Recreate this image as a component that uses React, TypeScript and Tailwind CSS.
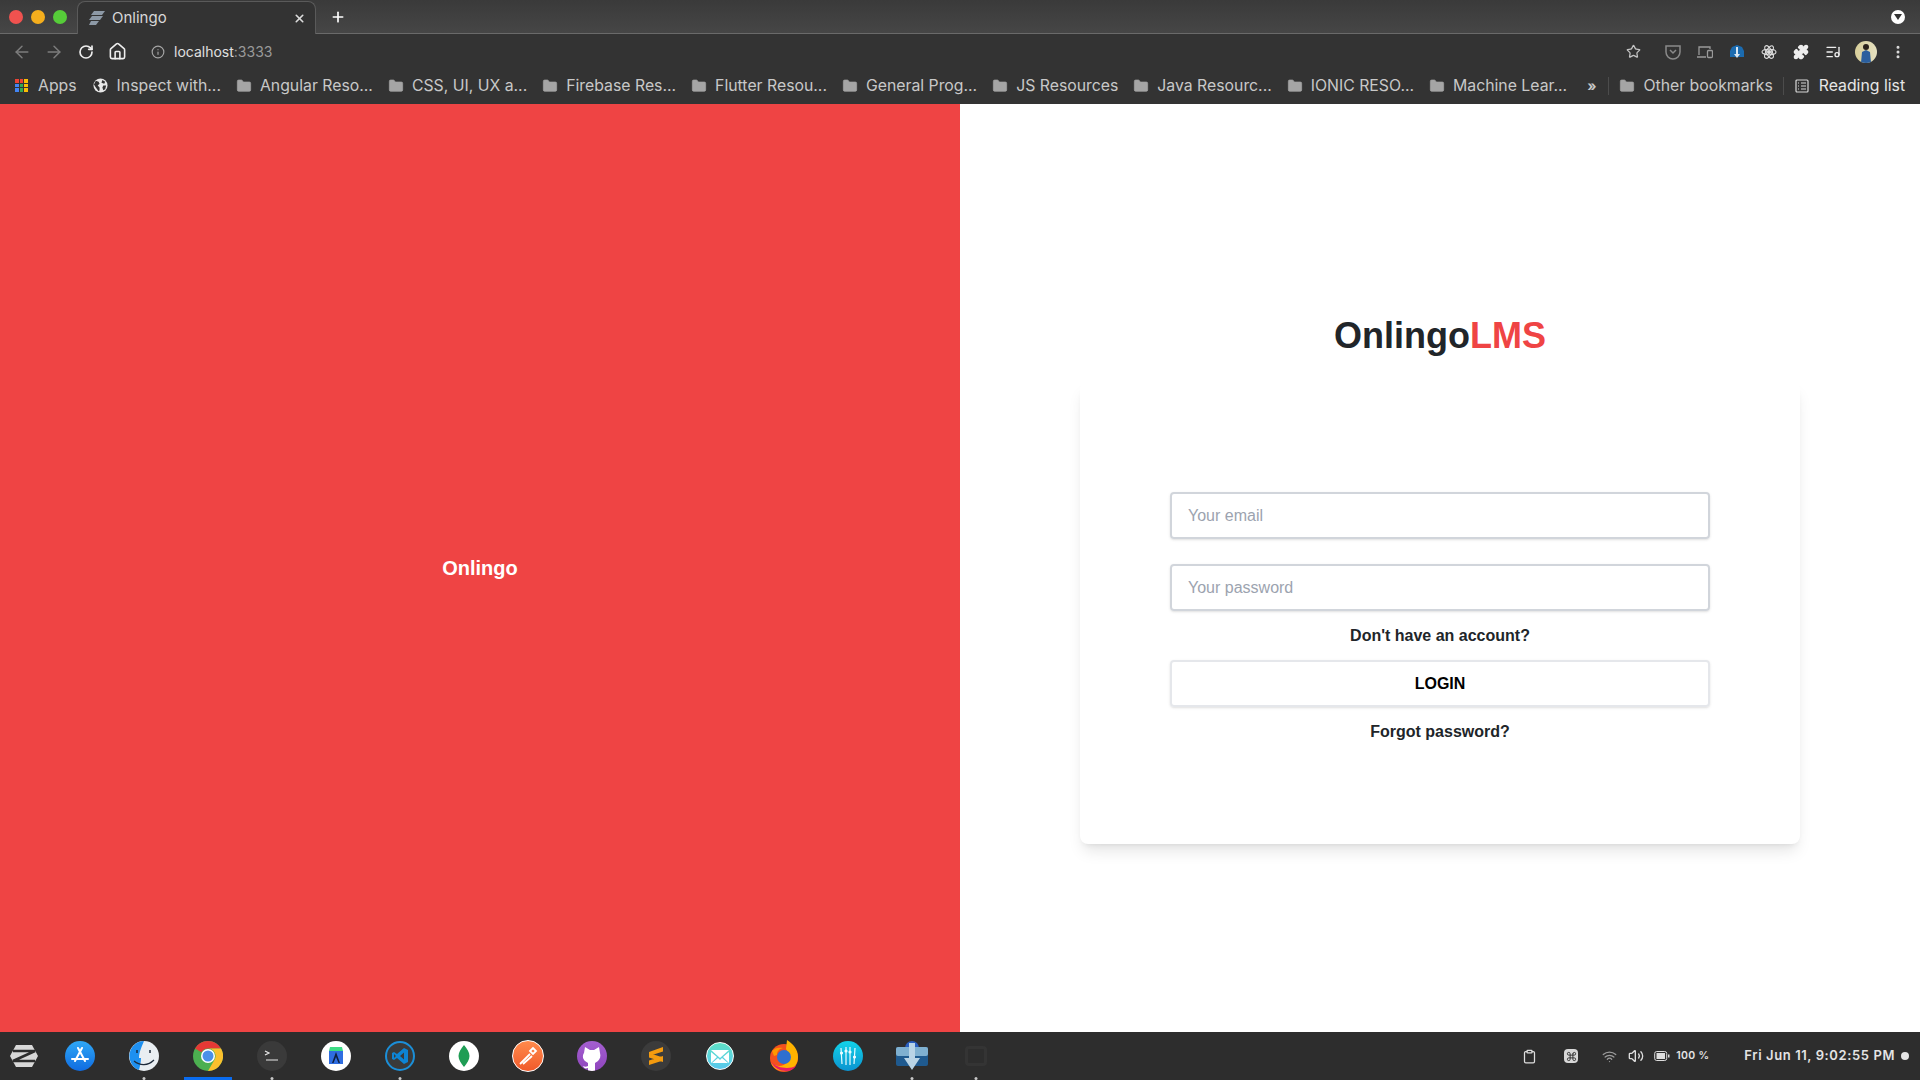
import { ArrowLeft, ArrowRight, RotateCw, Home, Info, Star, Puzzle, ListMusic, EllipsisVertical, Folder, Plus, X, Volume2, Clipboard, Command, Wifi } from "lucide-react";
import type { ReactNode } from "react";

const bookmarks = ["Angular Reso...", "CSS, UI, UX a...", "Firebase Res...", "Flutter Resou...", "General Prog...", "JS Resources", "Java Resourc...", "IONIC RESO...", "Machine Lear..."];

function FolderIcon() {
  return <Folder size={16} className="shrink-0 text-[#a5a5a5]" fill="#a5a5a5" strokeWidth={1} />;
}

function AppsGrid() {
  const colors = ["#ea4335", "#ea4335", "#fbbc05", "#4285f4", "#34a853", "#fbbc05", "#4285f4", "#34a853", "#fbbc05"];
  return (
    <div className="grid h-[13px] w-[13px] shrink-0 grid-cols-3 gap-[1px]">
      {colors.map((c, i) => (
        <span key={i} style={{ backgroundColor: c }} />
      ))}
    </div>
  );
}

function Globe() {
  return (
    <svg width="15" height="15" viewBox="0 0 16 16" className="shrink-0">
      <circle cx="8" cy="8" r="7.5" fill="#e8e8e8" />
      <path d="M3 3l3 1 1 2-2 2 2 2v3l-1 1-3-4-2-3zM10 2l3 2-1 2-3-1zM11 8l3 0-1 4-2 1-1-3z" fill="#333" />
    </svg>
  );
}

function TabStrip() {
  return (
    <div className="flex h-[34px] shrink-0 items-end border-b border-[#6a6a6a] bg-gradient-to-b from-[#3a3a3a] to-[#464646]">
      <div className="flex h-full w-[77px] items-center gap-2 pl-[9px]">
        <span className="h-[14px] w-[14px] rounded-full bg-[#f0524f]" />
        <span className="h-[14px] w-[14px] rounded-full bg-[#f5ae1d]" />
        <span className="h-[14px] w-[14px] rounded-full bg-[#56cc39]" />
      </div>
      <div className="mb-[-1px] flex h-[33px] w-[239px] items-center rounded-t-lg border border-b-0 border-[#5a5a5a] bg-[#333333] pl-[11px] pr-[9px]">
        <svg width="16" height="14" viewBox="0 0 16 14" className="shrink-0">
          <path d="M5 0h11l-3 4H2zM3 5h11l-3 4H0zM2 10h8l-3 4H0z" fill="#8d99a6" />
        </svg>
        <span className="ml-[7px] text-[15px] text-[#d8d8d8]">Onlingo</span>
        <X size={13} strokeWidth={3} className="ml-auto text-[#dcdcdc]" />
      </div>
      <div className="flex h-full items-center pl-[14px]">
        <Plus size={16} strokeWidth={2.5} className="text-white" />
      </div>
      <div className="ml-auto flex h-full items-center pr-[15px]">
        <span className="flex h-[14px] w-[14px] items-center justify-center rounded-full bg-white">
          <span className="h-0 w-0 border-x-[4px] border-t-[6px] border-x-transparent border-t-[#333]" />
        </span>
      </div>
    </div>
  );
}

function Toolbar() {
  return (
    <div className="flex h-[35px] shrink-0 items-center bg-[#333333] pl-[12px] pr-[14px]">
      <ArrowLeft size={20} strokeWidth={1.75} className="text-[#7d7d7d]" />
      <ArrowRight size={20} strokeWidth={1.75} className="ml-[12px] text-[#7d7d7d]" />
      <RotateCw size={16} strokeWidth={2.5} className="ml-[14px] text-[#eeeeee]" />
      <Home size={19} strokeWidth={2} className="ml-[14px] text-[#eeeeee]" />
      <Info size={14} className="ml-[24px] text-[#a5a5a5]" />
      <span className="ml-[9px] font-['Inter',sans-serif] text-[14px] text-[#e0e0e0]">
        localhost<span className="text-[#9a9a9a]">:3333</span>
      </span>
      <Star size={15} className="ml-auto text-[#c4c4c4]" />
      <div className="ml-[24px] flex items-center gap-[16px]">
        <svg width="16" height="16" viewBox="0 0 16 16" fill="none" stroke="#8a8a8a" strokeWidth="1.5">
          <path d="M1 2h14v6a7 7 0 0 1-14 0z" />
          <path d="M5 6l3 3 3-3" />
        </svg>
        <svg width="16" height="16" viewBox="0 0 16 16" fill="none" stroke="#9a9a9a" strokeWidth="1.3">
          <path d="M2 11V3h11v2M0 13h9" />
          <rect x="10.500" y="6.500" width="5" height="7" rx="1" />
        </svg>
        <svg width="16" height="16" viewBox="0 0 16 16">
          <path d="M8 1l5 2 2 4v6H1V7l2-4z" fill="#1b6bb0" />
          <path d="M7 3h2v7h2l-3 4-3-4h2z" fill="#d7e6f2" />
        </svg>
        <svg width="16" height="16" viewBox="0 0 16 16" fill="none" stroke="#dedede" strokeWidth="1.100">
          <ellipse cx="8" cy="8" rx="7" ry="2.800" />
          <ellipse cx="8" cy="8" rx="7" ry="2.800" transform="rotate(60 8 8)" />
          <ellipse cx="8" cy="8" rx="7" ry="2.800" transform="rotate(120 8 8)" />
          <circle cx="8" cy="8" r="1.500" fill="#dedede" />
        </svg>
        <Puzzle size={16} className="text-[#eeeeee]" fill="#eeeeee" />
        <ListMusic size={16} className="text-[#eeeeee]" />
      </div>
      <div className="ml-[14px] h-[22px] w-[22px] shrink-0 overflow-hidden rounded-full bg-gradient-to-r from-[#d8cf9a] to-[#e6e0c0]">
        <svg width="22" height="22" viewBox="0 0 22 22">
          <circle cx="11" cy="6" r="3" fill="#2a221c" />
          <path d="M6 22l1-11 4-2 4 2 1 11z" fill="#2b5f9e" />
        </svg>
      </div>
      <EllipsisVertical size={16} strokeWidth={2.5} className="ml-[13px] text-[#dddddd]" />
    </div>
  );
}

function BookmarksBar() {
  return (
    <div className="flex h-[35px] shrink-0 items-center whitespace-nowrap bg-[#333333] pb-[2px] pl-[15px] font-['Inter',sans-serif] text-[15.800px] text-[#c8c8c8]">
      <div className="flex items-center gap-[10px]">
        <AppsGrid />
        <span>Apps</span>
      </div>
      <div className="ml-[16px] flex items-center gap-[9px]">
        <Globe />
        <span>Inspect with...</span>
      </div>
      <div className="ml-[15px] flex">
        {bookmarks.map((b) => (
          <div key={b} className="mr-[15px] flex items-center gap-[8px]">
            <FolderIcon />
            <span>{b}</span>
          </div>
        ))}
      </div>
      <span className="ml-[5px] text-[14px] font-bold">»</span>
      <span className="ml-[12px] h-[18px] w-px bg-[#4c4c4c]" />
      <div className="ml-[10px] flex items-center gap-[8px]">
        <FolderIcon />
        <span>Other bookmarks</span>
      </div>
      <span className="ml-[10px] h-[18px] w-px bg-[#4c4c4c]" />
      <div className="ml-[11px] flex items-center gap-[10px] text-[#e6e6e6]">
        <svg width="14" height="14" viewBox="0 0 14 14" fill="none" stroke="#d8d8d8" strokeWidth="1.200">
          <rect x="1" y="1" width="12" height="12" rx="1" />
          <path d="M3 4h1M6 4h5M3 7h1M6 7h5M3 10h1M6 10h5" />
        </svg>
        <span>Reading list</span>
      </div>
    </div>
  );
}

function LoginPanel() {
  return (
    <div className="flex flex-1 flex-col items-center bg-white pt-[212px] font-['Liberation_Sans',Arial,sans-serif]">
      <h1 className="text-4xl font-bold text-[#212529]">
        Onlingo<span className="text-[#ef4444]">LMS</span>
      </h1>
      <div className="mt-[26px] flex h-[462px] w-[720px] flex-col rounded-lg bg-white px-[90px] pt-[110px] shadow-lg">
        <input placeholder="Your email" className="h-[47px] w-full shrink-0 rounded border-2 border-[#d1d5db] px-4 text-base text-gray-700 shadow-sm outline-none placeholder:text-[#9ca3af]" />
        <input type="password" placeholder="Your password" className="mt-[25px] h-[47px] w-full shrink-0 rounded border-2 border-[#d1d5db] px-4 text-base text-gray-700 shadow-sm outline-none placeholder:text-[#9ca3af]" />
        <p className="mt-[13px] text-center text-base font-bold leading-6 text-[#212529]">Don't have an account?</p>
        <button className="mt-[12px] h-[47px] w-full shrink-0 rounded border-2 border-[#e5e7eb] text-base font-bold text-black shadow-sm">LOGIN</button>
        <p className="mt-[13px] text-center text-base font-bold leading-6 text-[#212529]">Forgot password?</p>
      </div>
    </div>
  );
}

function Round({ bg, children }: { bg: string; children?: ReactNode }) {
  return (
    <span className="flex h-[30px] w-[30px] items-center justify-center overflow-hidden rounded-full" style={{ background: bg }}>
      {children}
    </span>
  );
}

const dockIcons: { key: string; dot?: boolean; active?: boolean; icon: ReactNode }[] = [
  {
    key: "store",
    icon: (
      <Round bg="linear-gradient(#2fa8f7,#0f6be0)">
        <svg width="20" height="20" viewBox="0 0 20 20" fill="none" stroke="#fff" strokeWidth="2" strokeLinecap="round">
          <path d="M12 2L5 15M8 2l7 13M2 13h16" />
        </svg>
      </Round>
    ),
  },
  {
    key: "finder",
    dot: true,
    icon: (
      <svg width="30" height="30" viewBox="0 0 30 30">
        <circle cx="15" cy="15" r="15" fill="#e9eef2" />
        <path d="M15 0a15 15 0 0 0-5 29c1-4 2-8 2-12h-2c0-6 3-12 5-17z" fill="#1e90f0" />
        <path d="M5 20c6 5 14 5 20-1" fill="none" stroke="#1d2a3a" strokeWidth="1.200" />
        <path d="M8 9v3M21 9v3" stroke="#1d2a3a" strokeWidth="1.500" />
      </svg>
    ),
  },
  {
    key: "chrome",
    active: true,
    icon: (
      <svg width="30" height="30" viewBox="0 0 30 30">
        <circle cx="15" cy="15" r="15" fill="#4caf50" />
        <path d="M15 0a15 15 0 0 1 13 7.500H15a7.500 7.500 0 0 0-6.500 3.750L2 7.500A15 15 0 0 1 15 0z" fill="#e53935" />
        <path d="M28 7.500A15 15 0 0 1 15 30l6.500-11.250A7.500 7.500 0 0 0 15 7.500z" fill="#fbc02d" />
        <circle cx="15" cy="15" r="7" fill="#fff" />
        <circle cx="15" cy="15" r="5.500" fill="#4a90e8" />
      </svg>
    ),
  },
  {
    key: "terminal",
    dot: true,
    icon: (
      <Round bg="#3a3a3a">
        <svg width="16" height="14" viewBox="0 0 16 14" fill="none" stroke="#e8e8e8" strokeWidth="1.200">
          <path d="M1 2l4 2-4 2M2 11h12" />
        </svg>
      </Round>
    ),
  },
  {
    key: "studio",
    icon: (
      <Round bg="#ffffff">
        <svg width="22" height="22" viewBox="0 0 22 22">
          <path d="M5 2h12l1 4H4z" fill="#3ddc84" />
          <rect x="4" y="6" width="14" height="13" fill="#2f6de0" />
          <path d="M11 7l-4 11h1.500L11 12l2.500 6H15z" fill="#10213f" />
        </svg>
      </Round>
    ),
  },
  {
    key: "vscode",
    dot: true,
    icon: (
      <span className="flex h-[30px] w-[30px] items-center justify-center rounded-full border-2 border-[#1b8fd8] bg-[#3a3a3a]">
        <svg width="18" height="18" viewBox="0 0 18 18">
          <path d="M13 1l4 2v12l-4 2-7-6-3 2-2-1v-6l2-1 3 2zM13 5.500L9 9l4 3.500zM3 7v4l2-2z" fill="#0d84d4" fillRule="evenodd" />
        </svg>
      </span>
    ),
  },
  {
    key: "mongo",
    icon: (
      <Round bg="#ffffff">
        <svg width="12" height="22" viewBox="0 0 12 22">
          <path d="M6 0c3 4 5.500 7 5.500 11S9 18 6 22C3 18 .5 15 .5 11S3 4 6 0z" fill="#1f9d55" />
        </svg>
      </Round>
    ),
  },
  {
    key: "postman",
    icon: (
      <span className="flex h-[32px] w-[32px] items-center justify-center rounded-full border border-[#fff] bg-gradient-to-b from-[#ff8a4c] to-[#f0592a]">
        <svg width="22" height="22" viewBox="0 0 22 22" fill="none" stroke="#fff" strokeWidth="1.800">
          <path d="M3 19L13 9M6 19l9-8M13 6l3-3 3 3-3 3z" />
        </svg>
      </span>
    ),
  },
  {
    key: "github",
    icon: (
      <Round bg="linear-gradient(#a45fd0,#8f45bd)">
        <svg width="22" height="26" viewBox="0 0 22 26" className="mt-[4px]" fill="#fff">
          <path d="M4 2l5 3h4l5-3 1 6c1 3 0 6-2 8-1 1-2 1-3 2v8H7v-3c-3 1-4 0-5-2 2 1 3 1 5 0v-3c-1-1-2-1-3-2-2-2-3-5-1-8z" />
        </svg>
      </Round>
    ),
  },
  {
    key: "sublime",
    icon: (
      <Round bg="#3b3b3b">
        <svg width="16" height="18" viewBox="0 0 16 18" fill="#f49b0f">
          <path d="M15 0v4.500L1 9V5zM1 6l14 4.500V15L1 10.500zM15 9v4.500L1 18v-4.500z" />
        </svg>
      </Round>
    ),
  },
  {
    key: "mail",
    icon: (
      <span className="flex h-[28px] w-[28px] items-center justify-center rounded-full border border-white bg-gradient-to-b from-[#5de0c5] to-[#5ac8ee]">
        <svg width="20" height="15" viewBox="0 0 20 15" fill="#fff">
          <path d="M1 1h18L10 9zM1 3v11l6-6zM19 3v11l-6-6zM2 14h16l-6-5-2 2-2-2z" />
        </svg>
      </span>
    ),
  },
  {
    key: "firefox",
    icon: (
      <svg width="30" height="32" viewBox="0 0 30 32">
        <circle cx="15" cy="18" r="14" fill="#f4511e" />
        <path d="M18 0c6 4 11 9 11 17 0 7-5 14-14 14-6 0-11-3-13-8 5 4 13 4 16-1 2-4 2-9-1-13z" fill="#ffb300" />
        <path d="M2 22c3 6 9 9 15 9 4 0 8-2 10-5-6 3-18 3-25-4z" fill="#e91e63" />
        <circle cx="15" cy="17" r="7" fill="#2f6fd0" />
        <path d="M3 11c3-3 6-4 11-3-4 1-6 3-6 7l-3 1z" fill="#ff9800" />
      </svg>
    ),
  },
  {
    key: "mixer",
    icon: (
      <Round bg="linear-gradient(#12d3e8,#0b93d0)">
        <svg width="20" height="20" viewBox="0 0 20 20" stroke="#e8fbff" strokeWidth="1.200" fill="#fff">
          <path d="M3 2l1 16M8 1v18M12 1v18M17 2l-1 16" />
          <circle cx="3.500" cy="7" r="1" />
          <circle cx="8" cy="5" r="1" />
          <circle cx="12" cy="6" r="1" />
          <circle cx="16.500" cy="11" r="1" />
        </svg>
      </Round>
    ),
  },
  {
    key: "download",
    dot: true,
    icon: (
      <svg width="32" height="30" viewBox="0 0 32 30">
        <circle cx="16" cy="7" r="7" fill="#2a5fc0" />
        <rect x="0" y="6" width="32" height="19" rx="2" fill="#1f5a8f" />
        <rect x="0" y="6" width="32" height="9" rx="2" fill="#7fb0d0" />
        <path d="M13 2h6v15h5l-8 12-8-12h5z" fill="#b9d4e6" />
      </svg>
    ),
  },
  {
    key: "empty",
    dot: true,
    icon: <span className="h-[20px] w-[22px] rounded-sm border-[3px] border-[#343434]" />,
  },
];

function Dock() {
  return (
    <div className="flex h-12 shrink-0 items-stretch bg-[#2d2d2d] font-['Inter',sans-serif]">
      <div className="flex w-12 items-center justify-center">
        <svg width="28" height="24" viewBox="0 0 28 24">
          <path d="M6 1h16l6 11-6 11H6L0 12z" fill="#d8d8d8" />
          <path d="M3 7h22L3 17h22" fill="none" stroke="#2d2d2d" strokeWidth="2.500" />
        </svg>
      </div>
      {dockIcons.map((d) => (
        <div key={d.key} className="relative flex w-16 items-center justify-center">
          {d.icon}
          {d.dot && <span className="absolute bottom-0 left-1/2 h-[3px] w-[3px] -translate-x-1/2 rounded-full bg-[#c8c8c8]" />}
          {d.active && <span className="absolute bottom-0 left-2 right-2 h-[3px] bg-[#0a6cf0]" />}
        </div>
      ))}
      <div className="ml-auto flex items-center pr-[11px] text-[#e4e4e4]">
        <Clipboard size={15} className="text-[#dddddd]" />
        <span className="ml-[27px] flex h-[14px] w-[14px] items-center justify-center rounded-sm bg-[#d8d8d8]">
          <Command size={11} className="text-[#2d2d2d]" />
        </span>
        <Wifi size={15} className="ml-[24px] text-[#9c9c9c]" />
        <Volume2 size={16} className="ml-[11px] text-[#dddddd]" />
        <svg width="16" height="12" viewBox="0 0 16 12" fill="none" className="ml-[10px]">
          <rect x="0.700" y="1.500" width="12" height="9" rx="2" stroke="#dddddd" />
          <rect x="2.500" y="3" width="8.500" height="6" fill="#dddddd" />
          <rect x="14" y="4.500" width="1.500" height="3" fill="#dddddd" />
        </svg>
        <span className="ml-[6px] text-[10.500px] font-semibold tracking-[0.3px]">100 %</span>
        <span className="ml-[35px] text-[13px] font-semibold tracking-[0.6px]">Fri Jun 11, 9:02:55 PM</span>
        <span className="ml-[6px] h-2 w-2 rounded-full bg-[#e4e4e4]" />
      </div>
    </div>
  );
}

export default function App() {
  return (
    <div className="flex h-screen w-full flex-col overflow-hidden font-['Inter',sans-serif]">
      <TabStrip />
      <Toolbar />
      <BookmarksBar />
      <main className="flex h-[928px] shrink-0">
        <div className="flex w-[960px] items-center justify-center bg-[#ef4444] font-['Liberation_Sans',Arial,sans-serif] text-xl font-bold text-white">
          Onlingo
        </div>
        <LoginPanel />
      </main>
      <Dock />
    </div>
  );
}
